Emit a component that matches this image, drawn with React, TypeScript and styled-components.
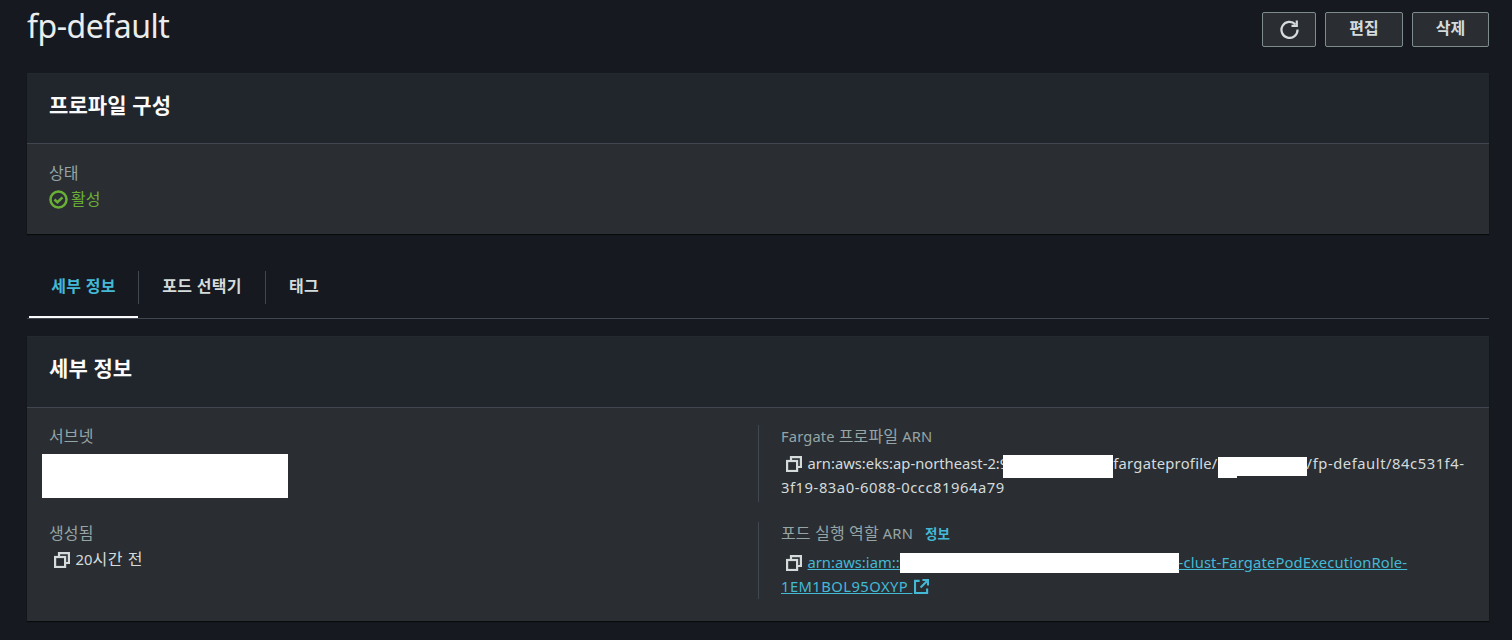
import styled, { createGlobalStyle } from 'styled-components';

const GlobalStyle = createGlobalStyle`
    html, body {
        margin: 0;
        padding: 0;
        height: 640px;
        overflow: hidden;
        background: #16191f;
    }
    body {
        font-family: "Noto Sans", "Noto Sans CJK KR", sans-serif;
        font-size: 14px;
        color: #d5dbdb;
    }
`;

const Page = styled.div`
    width: 1512px;
    height: 640px;
    box-sizing: border-box;
    padding: 12px 23px 0 27px;
`;

const PageHeader = styled.header`
    display: flex;
    justify-content: space-between;
    height: 61px;
`;

const Title = styled.h1`
    margin: -3px 0 0;
    font-size: 32px;
    line-height: 34px;
    font-weight: 400;
    letter-spacing: -0.5px;
    color: #eaeded;
`;

const Actions = styled.div`
    display: flex;
    gap: 9px;
    align-items: flex-start;
`;

const Button = styled.button<{ $width: number }>`
    display: flex;
    align-items: center;
    justify-content: center;
    width: ${props => props.$width}px;
    height: 35px;
    padding: 0 0 5px;
    background: #2a2e33;
    border: 1px solid #7f8c8d;
    border-radius: 2px;
    color: #d5dbdb;
    font-family: inherit;
    font-size: 16px;
    font-weight: 700;
`;

const IconButton = styled(Button)`
    padding: 0;
`;

const Card = styled.section<{ $height: number }>`
    height: ${props => props.$height}px;
    display: flex;
    flex-direction: column;
    background: #2a2e33;
    box-shadow: 0 1px 1px rgba(0, 0, 0, 0.6);
`;

const CardHeader = styled.div<{ $height: number }>`
    height: ${props => props.$height}px;
    flex: none;
    display: flex;
    align-items: center;
    box-sizing: border-box;
    padding: 0 22px ${props => props.$height - 63}px;
    background: #21252c;
    border-top: 1px solid #242830;
    border-bottom: 1px solid #414750;
`;

const CardTitle = styled.h2`
    margin: 0;
    font-size: 21px;
    line-height: 24px;
    font-weight: 700;
    letter-spacing: 0.1px;
    color: #fafafa;
`;

const StatusBody = styled.div`
    padding: 19px 22px 0;
`;

const Label = styled.div`
    font-size: 14.7px;
    line-height: 20px;
    letter-spacing: 0.15px;
    color: #95a5a6;
`;

const Ko = styled.span`
    font-size: 16px;
`;

const Status = styled.div`
    display: flex;
    align-items: center;
    gap: 3px;
    margin-top: 6px;
    font-size: 16px;
    line-height: 20px;
    color: #6aaf35;
`;

const Tabs = styled.nav`
    display: flex;
    height: 54px;
    margin-top: 30px;
    padding-left: 2px;
    border-bottom: 1px solid #414750;
`;

const Tab = styled.div<{ $width: number; $active?: boolean }>`
    position: relative;
    width: ${props => props.$width}px;
    box-sizing: border-box;
    height: 54px;
    padding-top: 11px;
    text-align: center;
    font-size: 16px;
    line-height: 22px;
    font-weight: 700;
    letter-spacing: 0.3px;
    color: ${props => (props.$active ? '#44b9d6' : '#d5dbdb')};

    &::after {
        content: '';
        position: absolute;
        left: 0;
        right: 0;
        bottom: 0;
        height: 2px;
        background: ${props => (props.$active ? '#fafafa' : 'transparent')};
    }
`;

const TabDivider = styled.span`
    width: 1px;
    height: 33px;
    margin-top: 7px;
    background: #414750;
`;

const DetailsCard = styled(Card)`
    margin-top: 17px;
`;

const DetailGrid = styled.div`
    display: grid;
    grid-template-columns: 731px 1fr;
    grid-template-rows: 97px 98px;
    padding-top: 18px;
`;

const LeftCell = styled.div`
    padding-left: 22px;
`;

const RightCell = styled.div`
    height: 76px;
    margin-top: -1px;
    padding: 1px 20px 0 22px;
    border-left: 1px solid #414750;
`;

/* white blocks that hide account ids, sitting in the text flow */
const Redacted = styled.span<{ $width: number; $height: number; $top: number; $overlap?: number }>`
    display: inline-block;
    width: ${props => props.$width}px;
    height: ${props => props.$height}px;
    margin: ${props => props.$top}px 0 -10px ${props => -(props.$overlap ?? 0)}px;
    vertical-align: top;
    background: #fff;
`;

const SubnetRedacted = styled.div`
    width: 246px;
    height: 44px;
    margin: 8px 0 0 -7px;
    background: #fff;
`;

const Value = styled.div<{ $gap: number }>`
    margin-top: ${props => props.$gap}px;
    font-size: 14.75px;
    line-height: 24px;
    color: #d5dbdb;
    word-break: break-word;
`;

const Spaced = styled.span<{ $ls: number }>`
    letter-spacing: ${props => props.$ls}px;
`;

const CopyIcon = styled.svg`
    display: inline-block;
    width: 16px;
    height: 16px;
    margin: 0 5.5px 0 5px;
    vertical-align: -3px;
    color: #d5dbdb;
`;

const ArnLink = styled.a`
    color: #44b9d6;
    text-decoration: underline;
`;

const ExternalIcon = styled.svg`
    width: 15px;
    height: 15px;
    margin-left: 2px;
    vertical-align: -2px;
`;

const InfoLink = styled.span`
    margin-left: 12px;
    font-size: 13.5px;
    font-weight: 700;
    color: #44b9d6;
`;

function Copy() {
    return (
        <CopyIcon viewBox="0 0 16 16" fill="none" stroke="currentColor" strokeWidth="2.2">
            <rect x="1.1" y="5" width="10" height="10" />
            <path d="M5 4V1.1h9.9V11h-3" />
        </CopyIcon>
    );
}

export default function App() {
    return (
        <Page>
            <GlobalStyle />
            <PageHeader>
                <Title>fp-default</Title>
                <Actions>
                    <IconButton $width={54} aria-label="새로고침">
                        <svg width="19" height="19" viewBox="0 0 18 18" fill="none" stroke="#d5dbdb" strokeWidth="2.1">
                            <path d="M14.6 4.2A7.6 7.6 0 1 0 16.6 9" />
                            <path d="M15.9 0.5v5h-5" />
                        </svg>
                    </IconButton>
                    <Button $width={78}>편집</Button>
                    <Button $width={77}>삭제</Button>
                </Actions>
            </PageHeader>

            <Card $height={161}>
                <CardHeader $height={71}>
                    <CardTitle>프로파일 구성</CardTitle>
                </CardHeader>
                <StatusBody>
                    <Label><Ko>상태</Ko></Label>
                    <Status>
                        <svg width="19" height="19" viewBox="0 0 18 18" fill="none" stroke="#6aaf35" strokeWidth="2.4">
                            <circle cx="9" cy="9" r="7.6" />
                            <path d="M5.2 9l2.8 2.6 4.8-4.6" />
                        </svg>
                        활성
                    </Status>
                </StatusBody>
            </Card>

            <Tabs>
                <Tab $width={109} $active>세부 정보</Tab>
                <TabDivider />
                <Tab $width={126}>포드 선택기</Tab>
                <TabDivider />
                <Tab $width={76}>태그</Tab>
            </Tabs>

            <DetailsCard $height={285}>
                <CardHeader $height={72}>
                    <CardTitle>세부 정보</CardTitle>
                </CardHeader>
                <DetailGrid>
                    <LeftCell>
                        <Label><Ko>서브넷</Ko></Label>
                        <SubnetRedacted />
                    </LeftCell>
                    <RightCell>
                        <Label>Fargate <Ko>프로파일</Ko> ARN</Label>
                        <Value $gap={5}>
                            <Copy />
                            arn:aws:eks:ap-northeast-2:9<Redacted $width={110.5} $height={23} $top={4} $overlap={5.5} />
                            <Spaced $ls={0.25}>fargateprofile/</Spaced>
                            <Redacted $width={19} $height={21} $top={6} />
                            <Redacted $width={70} $height={19} $top={6} />
                            <Spaced $ls={0.55}>/fp-default/84c531f4-3f19-83a0-6088-0ccc81964a79</Spaced>
                        </Value>
                    </RightCell>
                    <LeftCell>
                        <Label><Ko>생성됨</Ko></Label>
                        <Value $gap={4}>
                            <Copy />
                            20<Spaced $ls={0.6}><Ko>시간 전</Ko></Spaced>
                        </Value>
                    </LeftCell>
                    <RightCell>
                        <Label>
                            <Ko>포드 실행 역할</Ko> ARN<InfoLink>정보</InfoLink>
                        </Label>
                        <Value $gap={6}>
                            <Copy />
                            <ArnLink>
                                arn:aws:iam::9<Redacted $width={278.5} $height={20} $top={3} $overlap={8} />
                                <Spaced $ls={0.15}>-clust-FargatePodExecutionRole-</Spaced>
                                <Spaced $ls={0.45}>1EM1BOL95OXYP </Spaced>
                                <ExternalIcon viewBox="0 0 16 16" fill="none" stroke="#44b9d6" strokeWidth="2.2">
                                    <path d="M6 2H1.1v12.9H14V10" />
                                    <path d="M9 1.1h5.9V7M15 1L7 9" />
                                </ExternalIcon>
                            </ArnLink>
                        </Value>
                    </RightCell>
                </DetailGrid>
            </DetailsCard>
        </Page>
    );
}
